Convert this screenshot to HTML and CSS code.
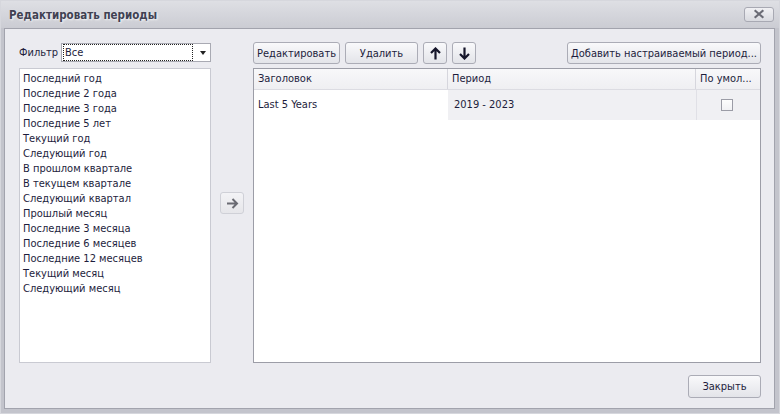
FILE: index.html
```html
<!DOCTYPE html>
<html lang="ru">
<head>
<meta charset="utf-8">
<title>Редактировать периоды</title>
<link rel="stylesheet" href="styles.css">
</head>
<body>
<div class="window">
  <div class="titlebar">
    <span class="title">Редактировать периоды</span>
    <button class="close-btn" type="button" aria-label="Закрыть">
      <svg width="12" height="10" viewBox="0 0 12 10"><path d="M2.5 2 L9.5 8 M9.5 2 L2.5 8" stroke="#6a6b75" stroke-width="2.2" stroke-linecap="square"/></svg>
    </button>
  </div>
  <div class="client">
    <div class="main">
      <div class="left">
        <div class="filter-row">
          <span class="filter-label">Фильтр</span>
          <div class="combo">
            <span class="combo-text">Все</span>
            <span class="combo-arrow"></span>
          </div>
        </div>
        <ul class="list">
          <li>Последний год</li>
          <li>Последние 2 года</li>
          <li>Последние 3 года</li>
          <li>Последние 5 лет</li>
          <li>Текущий год</li>
          <li>Следующий год</li>
          <li>В прошлом квартале</li>
          <li>В текущем квартале</li>
          <li>Следующий квартал</li>
          <li>Прошлый месяц</li>
          <li>Последние 3 месяца</li>
          <li>Последние 6 месяцев</li>
          <li>Последние 12 месяцев</li>
          <li>Текущий месяц</li>
          <li>Следующий месяц</li>
        </ul>
      </div>
      <div class="middle">
        <button class="btn move-btn" type="button" aria-label="Добавить">
          <svg width="13" height="11" viewBox="0 0 13 11"><path d="M1 5.5 H11 M6.5 1 L11 5.5 L6.5 10" fill="none" stroke="#6a6b73" stroke-width="2"/></svg>
        </button>
      </div>
      <div class="right">
        <div class="toolbar">
          <button class="btn btn-edit" type="button">Редактировать</button>
          <button class="btn btn-delete" type="button">Удалить</button>
          <button class="btn btn-icon" type="button" aria-label="Вверх">
            <svg width="11" height="13" viewBox="0 0 11 13"><path d="M5.5 12.5 V2 M1 6 L5.5 1.5 L10 6" fill="none" stroke="#15152a" stroke-width="2.2"/></svg>
          </button>
          <button class="btn btn-icon" type="button" aria-label="Вниз">
            <svg width="11" height="13" viewBox="0 0 11 13"><path d="M5.5 0.5 V11 M1 7 L5.5 11.5 L10 7" fill="none" stroke="#15152a" stroke-width="2.2"/></svg>
          </button>
          <span class="spacer"></span>
          <button class="btn btn-add" type="button">Добавить настраиваемый период...</button>
        </div>
        <div class="grid">
          <div class="grid-head">
            <div class="hcell col-title">Заголовок</div>
            <div class="hcell col-period">Период</div>
            <div class="hcell col-default">По умол...</div>
          </div>
          <div class="grid-row">
            <div class="cell col-title">Last 5 Years</div>
            <div class="cell col-period shaded">2019 - 2023</div>
            <div class="cell col-default shaded"><span class="checkbox"></span></div>
          </div>
        </div>
      </div>
    </div>
    <div class="footer">
      <button class="btn btn-close" type="button">Закрыть</button>
    </div>
  </div>
</div>
</body>
</html>
```

FILE: styles.css
```css
html, body {
  margin: 0;
  padding: 0;
}

body {
  width: 780px;
  height: 414px;
  overflow: hidden;
  font-family: "DejaVu Sans Condensed", "DejaVu Sans", sans-serif;
  font-stretch: condensed;
  font-size: 11px;
  color: #1d1d3c;
}

.window {
  box-sizing: border-box;
  width: 780px;
  height: 414px;
  display: flex;
  flex-direction: column;
  background: #c3c4cc;
  border: 1px solid #d6d7dd;
  padding: 0 4px 4px 3px;
}

/* caption bar */
.titlebar {
  height: 27px;
  display: flex;
  align-items: center;
  justify-content: space-between;
  margin: 0 -4px 0 -3px;
  padding: 0 5px 0 8px;
  background: linear-gradient(#dedfe4, #cbccd3);
}

.title {
  font-family: "DejaVu Sans", sans-serif;
  font-stretch: condensed;
  font-weight: bold;
  font-size: 11.5px;
  color: #404152;
  text-shadow: 1px 1px 2px rgba(255, 255, 255, 0.8);
  margin-top: 1px;
}

.close-btn {
  width: 30px;
  height: 15px;
  margin-top: -1px;
  padding: 0;
  display: flex;
  align-items: center;
  justify-content: center;
  border: 1px solid #a8a9b3;
  border-radius: 3px;
  background: linear-gradient(#f0f0f3, #d9dae0);
}

/* client area */
.client {
  flex: 1;
  display: flex;
  flex-direction: column;
  background: #ebebf0;
  border: 1px solid #a2a3ad;
  padding: 13px 13px 10px 14px;
}

.main {
  flex: 1;
  display: flex;
  min-height: 0;
}

.left {
  width: 192px;
  display: flex;
  flex-direction: column;
  padding-top: 1px;
}

.filter-row {
  height: 19px;
  display: flex;
  align-items: center;
}

.filter-label {
  width: 42px;
}

.combo {
  box-sizing: border-box;
  flex: 1;
  height: 19px;
  display: flex;
  align-items: center;
  background: #fff;
  border: 1px solid #a9aab3;
  padding: 1px 4px 1px 1px;
}

.combo-text {
  flex: 1;
  height: 15px;
  line-height: 15px;
  border: 1px dotted #222;
  padding-left: 1px;
  margin-right: 7px;
}

.combo-arrow {
  width: 0;
  height: 0;
  border-left: 3.5px solid transparent;
  border-right: 3.5px solid transparent;
  border-top: 4px solid #222;
}

.list {
  flex: 1;
  margin: 6px 0 0;
  padding: 2px 0 0 3px;
  list-style: none;
  background: #fff;
  border: 1px solid #c9cad2;
}

.list li {
  height: 15px;
  line-height: 15px;
}

.middle {
  width: 42px;
  display: flex;
  justify-content: center;
  padding-top: 150px;
  box-sizing: border-box;
}

.right {
  flex: 1;
  display: flex;
  flex-direction: column;
}

.toolbar {
  height: 22px;
  display: flex;
  gap: 5px;
}

.spacer {
  flex: 1;
}

.btn {
  box-sizing: border-box;
  height: 22px;
  padding: 0 4px;
  font: inherit;
  color: #1d1d3c;
  white-space: nowrap;
  border: 1px solid #abacb6;
  border-radius: 3px;
  background: linear-gradient(#f9f9fb, #e3e4e9);
  display: flex;
  align-items: center;
  justify-content: center;
}

.btn-edit { width: 87px; }
.btn-delete { width: 73px; }
.btn-icon { width: 24px; padding: 0; }
.btn-add { width: 194px; }

.move-btn {
  width: 24px;
  height: 22px;
  padding: 0;
  border-color: #cfd0d7;
  background: linear-gradient(#f3f3f6, #e6e6ea);
}

.grid {
  flex: 1;
  margin-top: 4px;
  background: #fff;
  border: 1px solid #9c9da7;
}

.grid-head,
.grid-row {
  display: flex;
}

.grid-head {
  height: 20px;
  background: linear-gradient(#f8f8fa, #efeff2);
  border-bottom: 1px solid #dcdce2;
}

.hcell {
  box-sizing: border-box;
  line-height: 20px;
  padding-left: 4px;
  border-right: 1px solid #d6d6dd;
}

.hcell.col-default {
  border-right: 0;
}

.col-title { width: 194px; }
.col-period { width: 248px; }
.col-default { flex: 1; }

.grid-row {
  height: 30px;
}

.cell {
  box-sizing: border-box;
  line-height: 30px;
  padding-left: 4px;
}

.cell.col-period {
  padding-left: 6px;
}

.shaded {
  background: #f0f0f3;
}

.cell.col-default {
  border-left: 1px solid #e0e0e6;
  display: flex;
  align-items: center;
  justify-content: center;
  padding-left: 0;
  padding-right: 3px;
}

.checkbox {
  box-sizing: border-box;
  width: 12px;
  height: 12px;
  border: 1px solid #9b9ca6;
  background: linear-gradient(#fdfdfd, #f1f1f4);
}

.footer {
  display: flex;
  justify-content: flex-end;
  padding-top: 12px;
}

.btn-close {
  width: 73px;
  height: 23px;
}
```
